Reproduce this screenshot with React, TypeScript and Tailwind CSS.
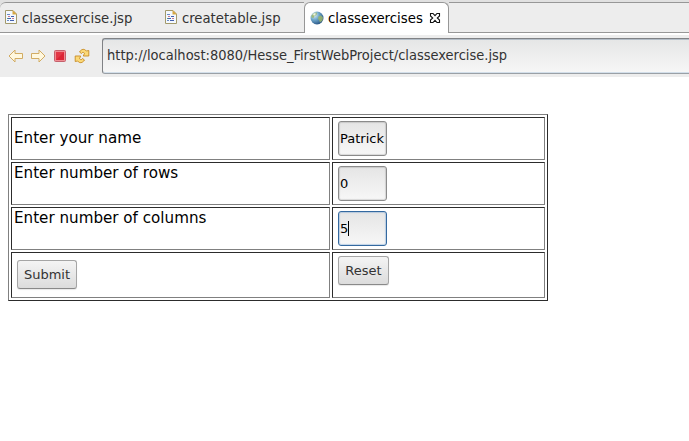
import React from "react";

const ui = "font-['DejaVu_Sans_Condensed','DejaVu_Sans',sans-serif] [font-stretch:condensed]";

function FileIcon() {
  return (
    <svg width="12" height="14" viewBox="0 0 12 14" className="shrink-0">
      <path d="M.5.5H8L11.500 4v9.500H.5z" fill="#f4f9ff" stroke="#a39a6c" />
      <path d="M7.500 0L12 4.500H7.500z" fill="#d6a744" />
      <path d="M2 4.500h3M2 10.500h2" stroke="#6b8bc7" />
      <path d="M3 6.500h2M7 8.500h2" stroke="#c9788c" />
      <path d="M6 6.500h3M3 8.500h3M5 10.500h4" stroke="#425fae" />
      <path d="M2 8.500h1" stroke="#5b9b80" />
    </svg>
  );
}

function GlobeIcon() {
  return (
    <svg width="14" height="14" viewBox="0 0 14 14" className="shrink-0">
      <defs>
        <radialGradient id="sea" cx=".3" cy=".28" r=".8">
          <stop offset="0" stopColor="#e2f1f5" />
          <stop offset=".45" stopColor="#6fa8cc" />
          <stop offset="1" stopColor="#244f80" />
        </radialGradient>
      </defs>
      <circle cx="7" cy="7" r="6.500" fill="url(#sea)" />
      <path d="M1.500 4.500L4 2l3-.5-.5 2.500-2 1-1 2-2-.5zM8.500 5.500l2.500-1 2 2-.5 3-2.500 2-1-2.500-1-1z" fill="#9ab56a" opacity=".85" />
      <path d="M3 3l2-1 1 1-2 2z" fill="#edf4e2" />
    </svg>
  );
}

function CloseIcon() {
  return (
    <svg width="12" height="12" viewBox="0 0 12 12" className="shrink-0">
      <path d="M1.500 1.500h2.500L6 3.700l2-2.200h2.500V4L8.300 6l2.200 2v2.500H8L6 8.300l-2 2.200H1.500V8L3.700 6 1.500 4z" fill="#fff" stroke="#111" strokeWidth="1.100" />
    </svg>
  );
}

function Arrow({ flip = false }: { flip?: boolean }) {
  return (
    <svg width="16" height="14" viewBox="0 0 16 14" className={flip ? "-scale-x-100" : ""}>
      <path d="M1 7L7 1V4.500h7.500v5H7V13z" fill="#fff8df" stroke="#d2ac63" strokeLinejoin="round" />
    </svg>
  );
}

function RefreshIcon() {
  return (
    <svg width="16" height="16" viewBox="0 0 16 16">
      <g fill="#fbd978" stroke="#c78b25" strokeWidth=".9" strokeLinejoin="round">
        <path d="M5.500 4C7.500.8 10.500.5 12.300 3L14.800 2.500V8H9.300L10.500 5.300C9.300 3.800 8 4.300 7.500 5.500z" />
        <path d="M10.500 12C8.500 15.200 5.500 15.500 3.700 13L1.200 13.500V8H6.700L5.500 10.700C6.700 12.200 8 11.700 8.500 10.500z" />
      </g>
    </svg>
  );
}

const cell = "border border-t-[#2c2c2c] border-l-[#2c2c2c] border-r-[#808080] border-b-[#808080]";
const label = `${cell} pl-[2px] pt-px text-[15.150px] leading-[19px] text-black font-['DejaVu_Sans',sans-serif]`;
const control = `${cell} pl-[5px] pt-[3px]`;
const button =
  "h-[29px] rounded-[3px] border border-[#a5a5a5] border-b-[#898989] bg-linear-to-b from-[#f4f4f4] to-[#dcdcdc] text-[13px] leading-[27px] text-[#333] text-center font-['DejaVu_Sans',sans-serif] block shadow-[0_1px_1px_#00000018]";

function Field({ value, active = false }: { value: string; active?: boolean }) {
  return (
    <div
      className={`flex h-[35px] w-[49px] items-center rounded-[3px] border bg-linear-to-b from-[#e5e5e5] to-[#f7f7f7] pl-px text-[13px] text-black whitespace-nowrap font-['DejaVu_Sans',sans-serif] ${
        active ? "border-[#3469a0] shadow-[inset_0_0_1px_1px_#7ba7d170]" : "border-[#8b8b8b] shadow-[inset_0_0_1px_1px_#00000020]"
      }`}
    >
      {value}
      {active && <span className="h-[15px] w-px bg-black" />}
    </div>
  );
}

export default function App() {
  return (
    <main className="h-[441px] w-[689px] overflow-hidden bg-white">
      <header className={`flex h-[33px] bg-[#e1e1e1] text-[14.700px] text-[#333] ${ui}`}>
        <div className="mt-[2px] flex h-[31px] w-[304px] items-center rounded-tl-[6px] border-t border-b border-[#979797] bg-[#ededed]">
          <div className="flex w-[160px] items-center gap-[5px] pl-[5px]">
            <FileIcon />
            <span className="pt-[2px]">classexercise.jsp</span>
          </div>
          <div className="flex items-center gap-[5px] pl-[5px]">
            <FileIcon />
            <span className="pt-[2px]">createtable.jsp</span>
          </div>
        </div>
        <div className="mt-[2px] flex h-[31px] w-[145px] items-center rounded-t-[6px] border border-b-0 border-[#979797] bg-white pl-[5px] text-black">
          <GlobeIcon />
          <span className="ml-[4px] w-[101px] text-[14.800px]">classexercises</span>
          <CloseIcon />
        </div>
        <div className="mt-[2px] h-[31px] flex-1 border-t border-b border-[#979797] bg-[#ededed]" />
      </header>
      <div className="mt-[2px] flex h-[42px] bg-[#ededed]">
        <div className="flex w-[102px] items-center pl-2">
          <Arrow />
          <span className="ml-[6px] flex"><Arrow flip /></span>
          <svg className="ml-[8px]" width="12" height="12" viewBox="0 0 12 12">
            <rect x=".5" y=".5" width="11" height="11" rx="1" fill="#f08b92" stroke="#c4606c" />
            <rect x="2" y="2" width="8" height="8" fill="#dc2435" />
            <path d="M2 2h8L2 10z" fill="#e74552" opacity=".6" />
          </svg>
          <span className="ml-[8px]"><RefreshIcon /></span>
        </div>
        <div className={`mt-[3px] flex h-[36px] flex-1 items-center rounded-l-[3px] border border-r-0 border-t-[#808285] border-l-[#808285] border-b-[#9aa0a6] bg-linear-to-b from-[#e5e6e6] to-[#f7f7f7] pl-[4px] text-[14.500px] text-[#333] shadow-[inset_0_1px_0_#b3bdc7,inset_0_-1px_0_#d3dfea] ${ui}`}>
          http://localhost:8080/Hesse_FirstWebProject/classexercise.jsp
        </div>
      </div>
      <form className="mt-[37px] ml-2 grid h-[187px] w-[540px] grid-cols-[319px_213px] grid-rows-[43px_43px_43px_46px] gap-[2px] border border-t-[#808080] border-r-[#2c2c2c] border-b-[#2c2c2c] border-l-[#808080] p-[2px]">
        <div className={`${label} flex items-center pb-[2px]`}>Enter your name</div>
        <div className={control}><Field value="Patrick" /></div>
        <div className={label}>Enter number of rows</div>
        <div className={control}><Field value="0" /></div>
        <div className={label}>Enter number of columns</div>
        <div className={control}><Field value="5" active /></div>
        <div className={`${cell} pt-[7px] pl-[5px]`}><button type="button" className={`${button} w-[60px]`}>Submit</button></div>
        <div className={control}><button type="button" className={`${button} w-[51px]`}>Reset</button></div>
      </form>
    </main>
  );
}
